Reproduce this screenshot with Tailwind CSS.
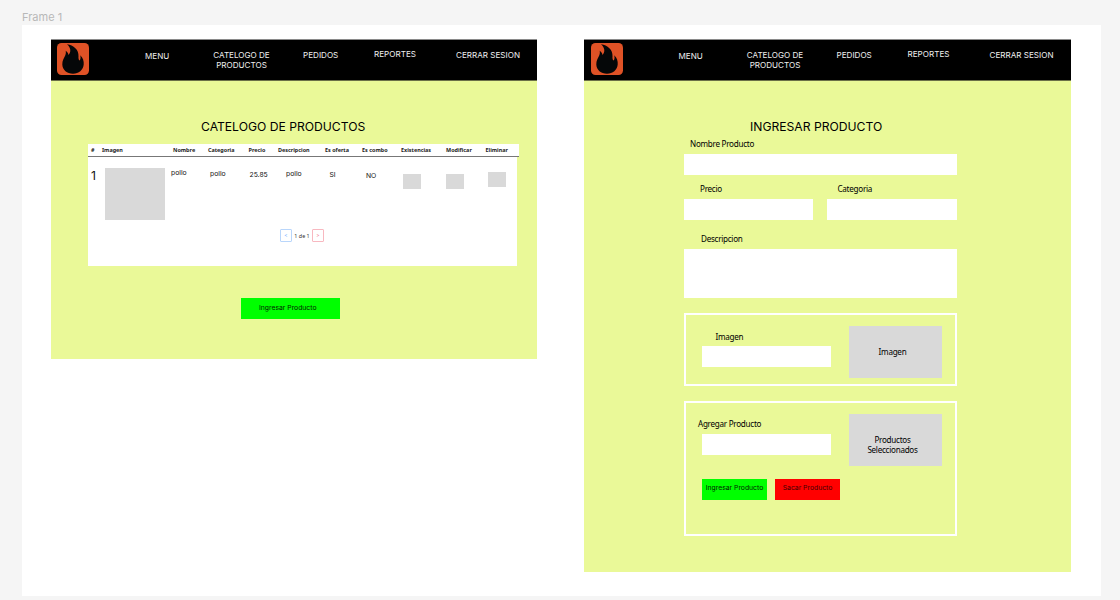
<!DOCTYPE html>
<html lang="es">
<head>
<meta charset="utf-8">
<title>Frame 1</title>
<script src="https://cdn.jsdelivr.net/npm/@tailwindcss/browser@4"></script>
</head>
<body class="w-[1120px] h-[600px] overflow-hidden bg-[#f5f5f5] font-['Inter',sans-serif] text-black pl-[22px]">
<p class="h-[25px] pt-[10px] text-[11px] leading-[14px] text-[#b8b8b8]">Frame 1</p>
<main class="flex items-start w-[1079px] h-[571px] bg-white pt-[14px] pl-[29px] gap-[47px]">

  <section class="w-[486px] h-[320px] bg-[#eaf998]">
    <nav class="flex items-start h-[42px] bg-black border-t border-[#8a8a8a] border-b border-b-[#6b7048] text-[#eee] text-[8.100px] leading-[10px] text-center whitespace-nowrap">
      <svg class="w-[32px] h-[32px] ml-[6px] mt-[3px] shrink-0" viewBox="0 0 32 32"><rect width="32" height="32" rx="4.5" fill="#df5226"/><path d="M10 1.300C16.500 2 22 7 21.500 13.200C21.300 15.300 21.700 17 22.600 17.600C23.700 16 23.800 14 23.200 12.200C26 14.500 27 18 26.700 21.500C26.200 27 21.800 30.800 16 30.800C10 30.800 5.500 27 5.300 21.500C5.200 17.500 7 15 8.200 12.500C8.900 11 9 9.500 8.700 7.800C10.500 9 11.300 10.500 11.500 12C14.300 9 14 4.800 10 1.300Z" fill="#050708"/></svg>
      <span class="w-[24px] ml-[56px] mt-[11px]">MENU</span>
      <span class="w-[57px] ml-[44px] mt-[10px]">CATELOGO DE<br>PRODUCTOS</span>
      <span class="w-[35px] ml-[33px] mt-[10px]">PEDIDOS</span>
      <span class="w-[42px] ml-[36px] mt-[9px]">REPORTES</span>
      <span class="w-[64px] ml-[40px] mt-[10px]">CERRAR SESION</span>
    </nav>
    <h1 class="w-[164px] ml-[150px] mt-[38px] h-[16px] text-[12.150px] leading-[16px] whitespace-nowrap">CATELOGO DE PRODUCTOS</h1>
    <div class="ml-[37px] mt-[9px] w-[431px]">
      <div class="flex h-[13px] bg-white border-b border-[#777] font-['Noto_Sans',sans-serif] font-bold text-[5.450px] leading-[12px] text-[#222] whitespace-nowrap">
        <span class="w-[11px] ml-[3px]">#</span>
        <span class="w-[71px]">Imagen</span>
        <span class="w-[35px]">Nombre</span>
        <span class="w-[40.500px]">Categoria</span>
        <span class="w-[29.500px]">Precio</span>
        <span class="w-[47px]">Descripcion</span>
        <span class="w-[37px]">Es oferta</span>
        <span class="w-[39px]">Es combo</span>
        <span class="w-[45px]">Existencias</span>
        <span class="w-[39.500px]">Modificar</span>
        <span>Eliminar</span>
      </div>
      <div class="w-[429px] h-[109px] bg-white pt-[11px]">
        <div class="flex items-start h-[52px] text-[6.800px] leading-[8px] whitespace-nowrap text-[#111]">
          <span class="w-[15px] pl-[3px] text-[12.150px] leading-[16px]">1</span>
          <div class="w-[60px] h-[52px] ml-[2px] bg-[#d9d9d9]"></div>
          <span class="w-[39px] ml-[6px] mt-px">pollo</span>
          <span class="w-[39.500px] mt-[2px]">pollo</span>
          <span class="w-[36.500px] mt-[3px]">25.85</span>
          <span class="w-[43.500px] mt-[2px]">pollo</span>
          <span class="w-[36.500px] mt-[3px]">SI</span>
          <span class="w-[37px] mt-[4px]">NO</span>
          <div class="w-[18px] h-[15px] mt-[6px] bg-[#d9d9d9]"></div>
          <div class="w-[18px] h-[15px] mt-[6px] ml-[25px] bg-[#d9d9d9]"></div>
          <div class="w-[18px] h-[15px] mt-[4px] ml-[23.500px] bg-[#d9d9d9]"></div>
        </div>
        <div class="flex items-center mt-[9px] ml-[192px] text-[5px] leading-[10px] whitespace-nowrap text-center">
          <span class="w-[12px] h-[13px] border border-[#b9d6fb] rounded-[1px] text-[#6aa9ff]">&lt;</span>
          <span class="w-[20px] text-[5.400px] text-[#333] font-['Noto_Sans',sans-serif]">1 de 1</span>
          <span class="w-[12px] h-[13px] border border-[#f8b8c0] rounded-[1px] text-[#f07080]">&gt;</span>
        </div>
      </div>
    </div>
    <div class="w-[99px] h-[21px] mt-[32px] ml-[190px] bg-[#00ff00] pl-[18px] pt-[5px] text-[6.800px] leading-[9px] whitespace-nowrap text-[#002200]">Ingresar Producto</div>
  </section>

  <section class="w-[487px] h-[533px] bg-[#eaf998]">
    <nav class="flex items-start h-[42px] bg-black border-t border-[#8a8a8a] border-b border-b-[#6b7048] text-[#eee] text-[8.100px] leading-[10px] text-center whitespace-nowrap">
      <svg class="w-[32px] h-[32px] ml-[7px] mt-[3px] shrink-0" viewBox="0 0 32 32"><rect width="32" height="32" rx="4.5" fill="#df5226"/><path d="M10 1.300C16.500 2 22 7 21.500 13.200C21.300 15.300 21.700 17 22.600 17.600C23.700 16 23.800 14 23.200 12.200C26 14.500 27 18 26.700 21.500C26.200 27 21.800 30.800 16 30.800C10 30.800 5.500 27 5.300 21.500C5.200 17.500 7 15 8.200 12.500C8.900 11 9 9.500 8.700 7.800C10.500 9 11.300 10.500 11.500 12C14.300 9 14 4.800 10 1.300Z" fill="#050708"/></svg>
      <span class="w-[24px] ml-[55.500px] mt-[11px]">MENU</span>
      <span class="w-[57px] ml-[44px] mt-[10px]">CATELOGO DE<br>PRODUCTOS</span>
      <span class="w-[35px] ml-[33px] mt-[10px]">PEDIDOS</span>
      <span class="w-[42px] ml-[36px] mt-[9px]">REPORTES</span>
      <span class="w-[64px] ml-[40px] mt-[10px]">CERRAR SESION</span>
    </nav>
    <h1 class="ml-[166px] mt-[38px] h-[16px] text-[12.150px] leading-[16px] whitespace-nowrap">INGRESAR PRODUCTO</h1>
    <form class="ml-[100px] w-[273px] font-['Noto_Sans',sans-serif] text-[8.100px] tracking-[-0.270px] leading-[10px] whitespace-nowrap">
      <p class="pl-[6px] mt-[4px]">Nombre Producto</p>
      <div class="h-[21px] mt-[5px] bg-white"></div>
      <div class="flex gap-[14px] mt-[9px]">
        <div class="w-[129px]"><p class="pl-[16px]">Precio</p><div class="h-[21px] mt-[5px] bg-white"></div></div>
        <div class="w-[130px]"><p class="pl-[10.500px]">Categoria</p><div class="h-[21px] mt-[5px] bg-white"></div></div>
      </div>
      <p class="pl-[17px] mt-[14px]">Descripcion</p>
      <div class="h-[49px] mt-[5px] bg-white"></div>
      <div class="flex justify-between h-[73px] mt-[15px] border-2 border-white pl-[16px] pr-[13px] pt-[11px]">
        <div class="w-[129px] pt-[6px]"><p class="pl-[13.500px]">Imagen</p><div class="h-[21px] mt-[4px] bg-white"></div></div>
        <div class="w-[93px] h-[52px] bg-[#d9d9d9] flex items-center justify-center pr-[6px]">Imagen</div>
      </div>
      <div class="h-[135px] mt-[15px] border-2 border-white pl-[12px] pr-[13px] pt-[11px]">
        <div class="flex justify-between">
          <div class="w-[133px] pt-[5px]"><p>Agregar Producto</p><div class="h-[21px] mt-[5px] ml-[4px] bg-white"></div></div>
          <div class="w-[93px] h-[52px] bg-[#d9d9d9] flex items-center justify-center text-center pr-[6px] pt-[10px]">Productos<br>Seleccionados</div>
        </div>
        <div class="flex gap-[8px] mt-[13px] ml-[4px] font-['Inter',sans-serif] text-[6.800px] tracking-normal leading-[9px] text-center">
          <div class="w-[65px] h-[21px] pt-[4px] bg-[#00ff00] text-[#002200]">Ingresar Producto</div>
          <div class="w-[65px] h-[21px] pt-[4px] bg-[#ff0000] text-[#400000]">Sacar Producto</div>
        </div>
      </div>
    </form>
  </section>
</main>
</body>
</html>
